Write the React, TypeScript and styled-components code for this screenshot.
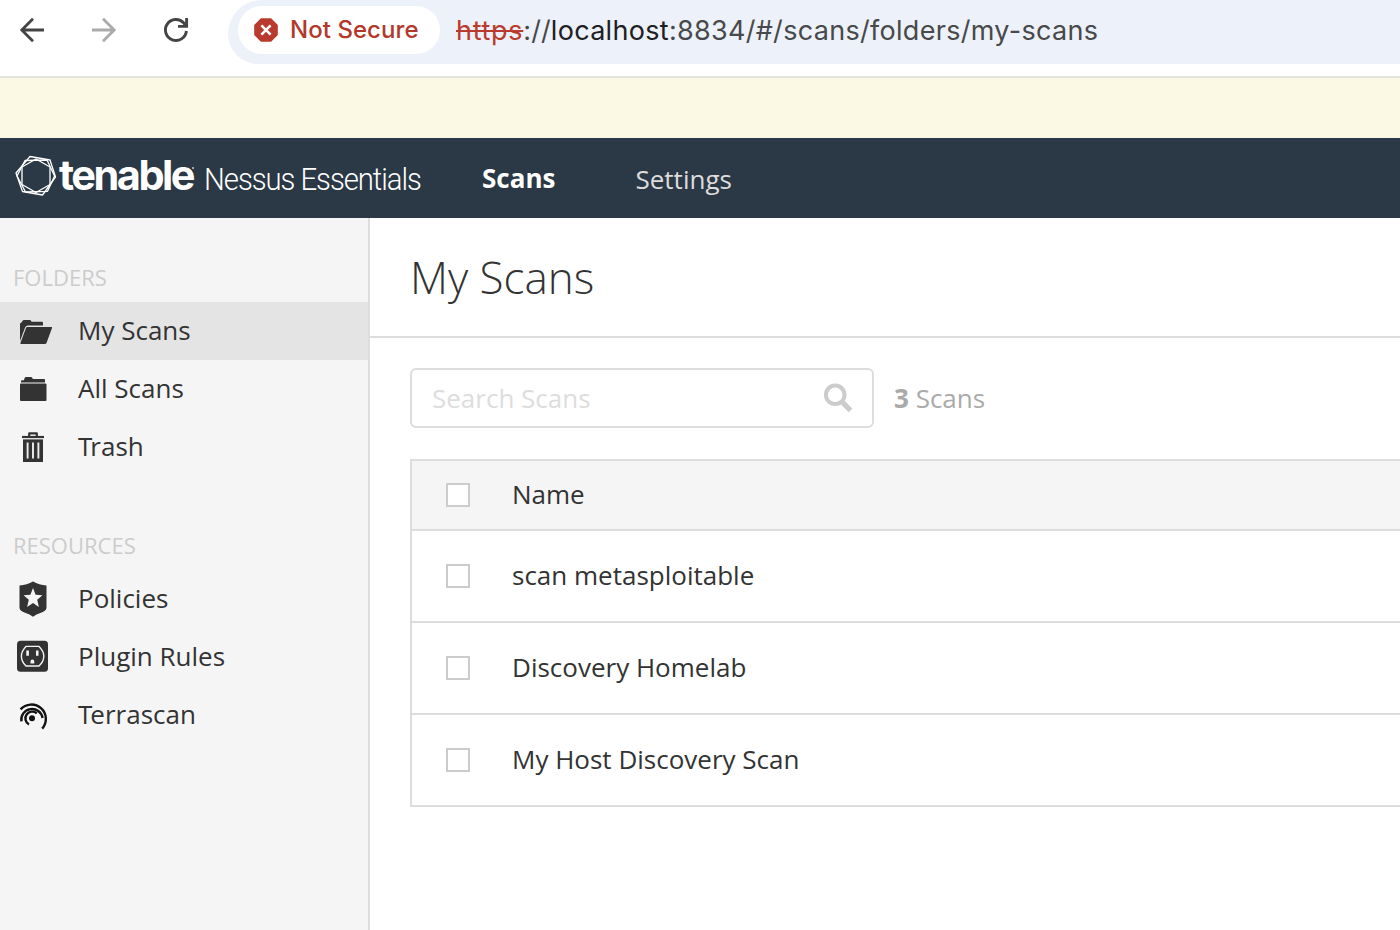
import React from 'react';
import styled, { createGlobalStyle } from 'styled-components';

const GlobalStyle = createGlobalStyle`
  * { box-sizing: border-box; }
  body {
    margin: 0;
    background: #fff;
    color: #333;
    font-family: 'Open Sans', 'Liberation Sans', sans-serif;
    font-size: 26px;
    overflow: hidden;
  }
  svg { display: block; flex: none; }
`;

const Page = styled.div`
  width: 100%;
  height: 930px;
  display: flex;
  flex-direction: column;
  overflow: hidden;
  white-space: nowrap;
`;

const BrowserBar = styled.div`
  height: 78px;
  flex: none;
  display: flex;
  align-items: flex-start;
  border-bottom: 2px solid #e1e5dd;
  font-family: Inter, 'Liberation Sans', sans-serif;
`;

const NavButtons = styled.div`
  width: 228px;
  height: 60px;
  padding-left: 16px;
  display: flex;
  align-items: center;
  gap: 40px;
`;

const AddressBar = styled.div`
  flex: 1;
  height: 64px;
  padding: 0 0 4px 10px;
  display: flex;
  align-items: center;
  background: #edf1f9;
  border-radius: 36px 0 0 32px;
`;

const SecurityChip = styled.div`
  width: 202px;
  height: 48px;
  padding-left: 16px;
  display: flex;
  align-items: center;
  gap: 12px;
  border-radius: 24px;
  background: #fff;
  color: #b3382c;
  font-size: 24px;
  font-weight: 500;
  letter-spacing: 0.05px;
`;

const ChipLabel = styled.span`
  padding-bottom: 2px;
`;

const Url = styled.div`
  margin-left: 16px;
  padding-top: 2px;
  color: #47494b;
  font-size: 27px;
  font-weight: 420;
  line-height: 34px;
  letter-spacing: 0.1px;
`;

const Scheme = styled.span`
  color: #b93a2e;
  letter-spacing: 0.7px;
  text-decoration: line-through;
  text-decoration-thickness: 2px;
`;

const Host = styled.span`
  color: #1f2023;
  letter-spacing: 0.3px;
`;

const UrlPath = styled.span`
  letter-spacing: 0.3px;
`;

const Notice = styled.div`
  height: 60px;
  flex: none;
  background: #fbf8e4;
`;

const Header = styled.header`
  height: 80px;
  flex: none;
  display: flex;
  align-items: center;
  background: #2b3845;
  color: #fff;
`;

const Brand = styled.div`
  width: 482px;
  padding: 0 0 4px 15px;
  display: flex;
  align-items: center;
  font-family: Inter, 'Liberation Sans', sans-serif;
`;

const BrandName = styled.span`
  position: relative;
  width: 135px;
  margin-left: 2px;
  padding-bottom: 2px;
  font-size: 41.5px;
  line-height: 48px;
  font-weight: 700;
  letter-spacing: -2.5px;

  &::after {
    content: '';
    position: absolute;
    top: 16px;
    right: 0;
    width: 2px;
    height: 2px;
    border-radius: 50%;
    background: #c5cace;
  }
`;

const Product = styled.span`
  margin-left: 10px;
  padding-top: 8px;
  font-family: Roboto, 'Liberation Sans', sans-serif;
  font-size: 31px;
  line-height: 40px;
  font-weight: 300;
  letter-spacing: -1.1px;
  transform: scaleX(0.945);
  transform-origin: left;
`;

const NavLink = styled.span<{ $active?: boolean }>`
  width: ${(p) => (p.$active ? 153.5 : 154)}px;
  font-weight: ${(p) => (p.$active ? 700 : 400)};
  color: ${(p) => (p.$active ? '#fff' : '#ddd')};
  padding-top: ${(p) => (p.$active ? 0 : 1)}px;
`;

const Body = styled.div`
  flex: 1;
  display: flex;
  min-height: 0;
`;

const Sidebar = styled.aside`
  width: 370px;
  flex: none;
  border-right: 2px solid #ddd;
  background: #f5f5f5;
`;

const Group = styled.section`
  padding-top: 36px;
  & + & { padding-top: 46px; }
`;

const GroupTitle = styled.div`
  height: 48px;
  padding-left: 13px;
  font-size: 22px;
  line-height: 46px;
  color: #ccc;
`;

const SideItem = styled.div<{ $active?: boolean }>`
  height: 58px;
  display: flex;
  align-items: center;
  background: ${(p) => (p.$active ? '#e4e4e4' : 'transparent')};
`;

const IconSlot = styled.span`
  width: 78px;
  padding: 2px 0 0 14px;
`;

const Label = styled.span<{ $tuck?: boolean }>`
  padding-bottom: 2px;
  &::first-letter { letter-spacing: ${(p) => (p.$tuck ? '-2px' : 'normal')}; }
`;

const Content = styled.main`
  flex: 1;
  min-width: 0;
`;

const TitleBar = styled.div`
  height: 120px;
  padding-left: 40px;
  border-bottom: 2px solid #ddd;
`;

const Title = styled.h1`
  margin: 0;
  font-size: 44px;
  line-height: 118px;
  font-weight: 300;
`;

const Tools = styled.div`
  padding: 30px 0 0 40px;
  display: flex;
  align-items: center;
  gap: 20px;
`;

const SearchBox = styled.div`
  width: 464px;
  height: 60px;
  padding: 0 19px 0 20px;
  display: flex;
  align-items: center;
  justify-content: space-between;
  border: 2px solid #ddd;
  border-radius: 6px;
  color: #ddd;
`;

const Count = styled.div`
  color: #aaa;
`;

const Table = styled.div`
  margin: 31px 0 0 40px;
  border: 2px solid #ddd;
  border-width: 2px 0 0 2px;
`;

const Row = styled.div<{ $head?: boolean }>`
  height: ${(p) => (p.$head ? 70 : 92)}px;
  padding-left: 34px;
  display: flex;
  align-items: center;
  gap: 42px;
  border-bottom: 2px solid #ddd;
  background: ${(p) => (p.$head ? '#f5f5f5' : '#fff')};
`;

const Checkbox = styled.span`
  width: 24px;
  height: 24px;
  border: 2px solid #ccc;
  background: #fff;
`;

const BackIcon = () => (
  <svg width="32" height="32" fill="none" stroke="#444" strokeWidth="2.8">
    <path d="M28 16H6M17 4.8L5.8 16L17 27.2" />
  </svg>
);

const ForwardIcon = () => (
  <svg width="32" height="32" fill="none" stroke="#aaa" strokeWidth="2.8">
    <path d="M4 16H26M15 4.8L26.2 16L15 27.2" />
  </svg>
);

const ReloadIcon = () => (
  <svg width="32" height="32" fill="none" stroke="#444" strokeWidth="2.9">
    <path d="M26.4 17A10.5 10.5 0 1 1 23.8 9L26 11.8" />
    <path d="M26.6 4V12.4H18" />
  </svg>
);

const WarningIcon = () => (
  <svg width="24" height="24">
    <path d="M7.2 1H16.8L23 7.2V16.8L16.8 23H7.2L1 16.8V7.2Z" fill="#b93a2e" stroke="#b93a2e" strokeWidth="1.6" strokeLinejoin="round" />
    <path d="M7.4 7.4L16.6 16.6M16.6 7.4L7.4 16.6" stroke="#fff" strokeWidth="2.6" />
  </svg>
);

const TenableMark = () => (
  <svg width="42" height="42" viewBox="0 0 42 42" fill="none" stroke="#fff" strokeWidth="1.3" strokeLinejoin="round">
    <path d="M15 1.5L35 5L40.5 22L27.5 40L7.5 36.5L1 18Z" />
    <path d="M21 4L35 12V29.5L21 37.5L7 29.5V12Z" />
    <path d="M10 5.5L32 5L39.6 21L32.5 36.3L10.5 37L2 21Z" />
  </svg>
);

const OpenFolderIcon = () => (
  <svg width="40" height="40" viewBox="0 -2 40 40" fill="#333">
    <path d="M6 27V10Q6 9 7 9L8.5 7Q9 6 10 6H16Q17 6 17.5 7.8H28Q29 7.8 29 9V11.5H14Q12 11.5 11.2 13.2Z" />
    <path d="M13.2 13H37.5Q38.5 13 38 14L32.5 29Q32 30 31 30H7.2Q6 30 6.4 29L12 14Q12.4 13 13.2 13Z" />
  </svg>
);

const FolderIcon = () => (
  <svg width="40" height="40" viewBox="0 -2 40 40" fill="#333">
    <path d="M7 10.5V9.2Q7 8.3 8 8.3H10Q10.5 5 12 5H17Q18.4 5 18.8 7H30Q31 7 31 8V10.5Z" />
    <rect x="6" y="11.5" width="26.5" height="17.5" rx="1" />
  </svg>
);

const TrashIcon = () => (
  <svg width="40" height="40" fill="none" stroke="#333">
    <path d="M8 9H30" strokeWidth="2.2" />
    <path d="M15.2 9V5.4H22.8V9" strokeWidth="2.2" strokeLinejoin="round" />
    <rect x="9" y="11.4" width="20" height="22.6" fill="#333" stroke="none" />
    <path d="M13.6 14.5V30.6M19 14.5V30.6M24.4 14.5V30.6" stroke="#eee" strokeWidth="1.9" />
  </svg>
);

const ShieldIcon = () => (
  <svg width="40" height="40">
    <path d="M19 1.5Q25 5 32.5 5.5V28Q32 31 27 32.8Q22 34.5 19 36.7Q16 34.5 11 32.8Q6 31 5.5 28V5.5Q13 5 19 1.5Z" fill="#333" />
    <path d="M19 8L21.6 14.8L28.4 15.2L23.2 19.7L24.9 27L19 23L13.1 27L14.8 19.7L9.6 15.2L16.4 14.8Z" fill="#f5f5f5" />
  </svg>
);

const OutletIcon = () => (
  <svg width="40" height="40">
    <rect x="3" y="2.7" width="31" height="31" rx="3.5" fill="#333" />
    <path d="M12 8.4H25Q29.8 13 29.8 18.2Q29.8 23.4 25 28H12Q7.4 23.4 7.4 18.2Q7.4 13 12 8.4Z" fill="none" stroke="#f5f5f5" strokeWidth="1.4" />
    <path d="M12.3 12.4H14.9V17.8H12.3ZM22 12.4H24.5V17.8H22ZM16.5 25.6V23.5Q16.5 21.6 18.4 21.6Q20.3 21.6 20.3 23.5V25.6Z" fill="#f5f5f5" />
  </svg>
);

const TerrascanIcon = () => (
  <svg width="40" height="40" fill="none" stroke="#111" strokeWidth="2.4">
    <path d="M6.6 13.4A14.3 14.3 0 0 1 28.2 32.6" />
    <path d="M7.4 25.4A10.7 10.7 0 1 1 28.6 22" />
    <path d="M15 28.4A6.8 6.8 0 1 1 22.8 17.4" />
    <circle cx="18" cy="22.3" r="3" fill="#111" stroke="none" />
  </svg>
);

const SearchIcon = () => (
  <svg width="30" height="30" fill="none" stroke="#ccc">
    <circle cx="12.2" cy="11.8" r="9.3" strokeWidth="4" />
    <path d="M19 18.8L27.5 27.3" strokeWidth="5.2" />
  </svg>
);

type Entry = { name: string; Icon: React.ComponentType; active?: boolean };

const folders: Entry[] = [
  { name: 'My Scans', Icon: OpenFolderIcon, active: true },
  { name: 'All Scans', Icon: FolderIcon },
  { name: 'Trash', Icon: TrashIcon },
];

const resources: Entry[] = [
  { name: 'Policies', Icon: ShieldIcon },
  { name: 'Plugin Rules', Icon: OutletIcon },
  { name: 'Terrascan', Icon: TerrascanIcon },
];

const scans = ['scan metasploitable', 'Discovery Homelab', 'My Host Discovery Scan'];

const SideGroup = ({ title, items }: { title: string; items: Entry[] }) => (
  <Group>
    <GroupTitle>{title}</GroupTitle>
    {items.map(({ name, Icon, active }) => (
      <SideItem key={name} $active={active}>
        <IconSlot><Icon /></IconSlot>
        <Label $tuck={name.startsWith('T')}>{name}</Label>
      </SideItem>
    ))}
  </Group>
);

export default function App() {
  return (
    <Page>
      <GlobalStyle />
      <BrowserBar>
        <NavButtons>
          <BackIcon />
          <ForwardIcon />
          <ReloadIcon />
        </NavButtons>
        <AddressBar>
          <SecurityChip>
            <WarningIcon />
            <ChipLabel>Not Secure</ChipLabel>
          </SecurityChip>
          <Url>
            <Scheme>https</Scheme>://<Host>localhost</Host>
            <UrlPath>:8834/#/scans/folders/my-scans</UrlPath>
          </Url>
        </AddressBar>
      </BrowserBar>
      <Notice />
      <Header>
        <Brand>
          <TenableMark />
          <BrandName>tenable</BrandName>
          <Product>Nessus Essentials</Product>
        </Brand>
        <NavLink $active>Scans</NavLink>
        <NavLink>Settings</NavLink>
      </Header>
      <Body>
        <Sidebar>
          <SideGroup title="FOLDERS" items={folders} />
          <SideGroup title="RESOURCES" items={resources} />
        </Sidebar>
        <Content>
          <TitleBar>
            <Title>My Scans</Title>
          </TitleBar>
          <Tools>
            <SearchBox>
              <span>Search Scans</span>
              <SearchIcon />
            </SearchBox>
            <Count><b>3</b> Scans</Count>
          </Tools>
          <Table>
            <Row $head>
              <Checkbox />
              <Label>Name</Label>
            </Row>
            {scans.map((name) => (
              <Row key={name}>
                <Checkbox />
                <Label>{name}</Label>
              </Row>
            ))}
          </Table>
        </Content>
      </Body>
    </Page>
  );
}
